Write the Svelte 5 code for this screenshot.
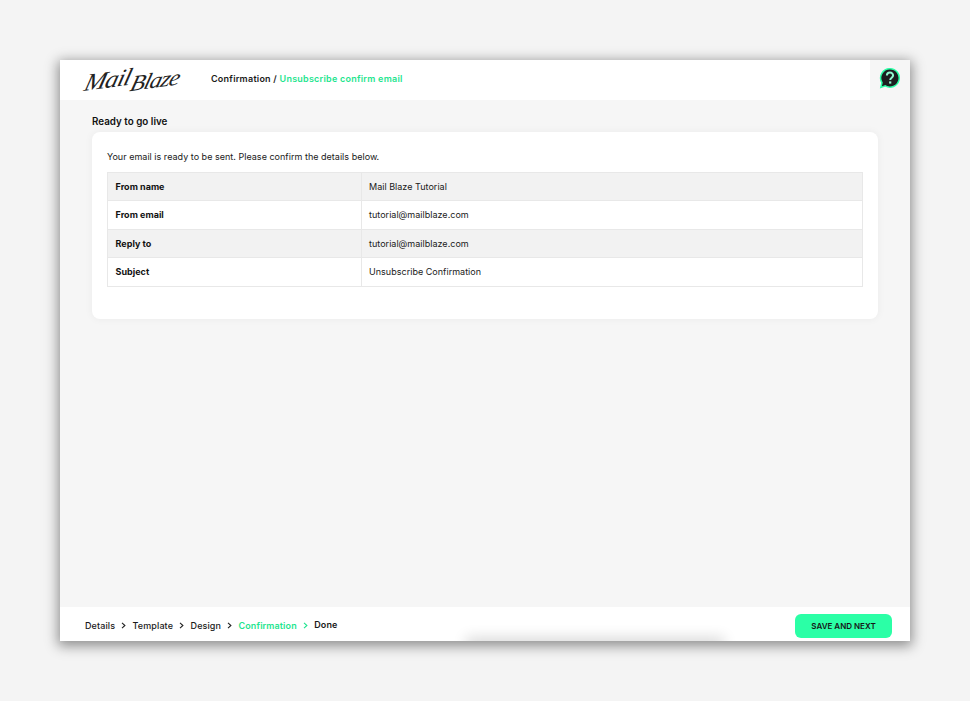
<script>
	const details = [
		{ label: 'From name', value: 'Mail Blaze Tutorial' },
		{ label: 'From email', value: 'tutorial@mailblaze.com' },
		{ label: 'Reply to', value: 'tutorial@mailblaze.com' },
		{ label: 'Subject', value: 'Unsubscribe Confirmation' }
	];

	const steps = [
		{ name: 'Details' },
		{ name: 'Template' },
		{ name: 'Design' },
		{ name: 'Confirmation', active: true },
		{ name: 'Done', last: true }
	];
</script>

<div class="page">
	<div class="window">
		<header>
			<div class="logo"><span>Mail</span><span class="blaze">Blaze</span></div>
			<div class="crumbs">Confirmation / <span class="green">Unsubscribe confirm email</span></div>
			<div class="help">
				<svg width="22" height="22" viewBox="0 0 22 22">
					<path d="M11 1.7a9.2 9.2 0 1 1-4.7 17.1L1.9 20.4l1.1-4.7A9.2 9.2 0 0 1 11 1.7z" fill="#1d1f20" stroke="#2bffa6" stroke-width="1.5" />
					<path d="M7.9 8.6a3.1 3.1 0 0 1 6.2 0c0 2-2.9 2.2-2.9 4.3" fill="none" stroke="#8ff8cf" stroke-width="2" />
					<rect x="10.1" y="14.4" width="2.2" height="2.2" fill="#8ff8cf" />
				</svg>
			</div>
		</header>

		<main>
			<h1>Ready to go live</h1>
			<section class="card">
				<p>Your email is ready to be sent. Please confirm the details below.</p>
				<table>
					<tbody>
						{#each details as row}
							<tr>
								<th>{row.label}</th>
								<td>{row.value}</td>
							</tr>
						{/each}
					</tbody>
				</table>
			</section>
		</main>

		<footer>
			<div class="glow"></div>
			<nav>
				{#each steps as step}
					<span class="step" class:green={step.active} class:last={step.last}>{step.name}</span>
					{#if !step.last}
						<svg class="chev" class:green={step.active} width="5" height="7" viewBox="0 0 5 7">
							<path d="M1 .8 3.9 3.5 1 6.2" fill="none" stroke="currentColor" stroke-width="1.1" />
						</svg>
					{/if}
				{/each}
			</nav>
			<button>SAVE AND NEXT</button>
		</footer>
	</div>
</div>

<style>
	:global(body) {
		margin: 0;
		background: #f4f4f4;
	}

	.page {
		padding: 60px;
		height: 701px;
		box-sizing: border-box;
		font-family: Inter, "Liberation Sans", sans-serif;
		font-size: 9px;
		letter-spacing: 0.02px;
		color: #1a1a1a;
	}

	.window {
		display: flex;
		flex-direction: column;
		height: 581px;
		background: #f6f6f6;
		box-shadow: 0 3px 12px 2px rgba(0, 0, 0, 0.42);
	}

	header {
		display: flex;
		align-items: flex-start;
		height: 40px;
		background: #fff;
		flex: none;
	}

	.logo {
		width: 125px;
		margin-left: 26px;
		padding-top: 5px;
		font-family: "Liberation Serif", serif;
		font-style: italic;
		font-size: 25px;
		line-height: 30px;
		letter-spacing: -0.9px;
		color: #222;
		white-space: nowrap;
	}

	.logo span {
		display: inline-block;
		transform: skewX(-22deg) rotate(-8deg);
	}

	.logo .blaze {
		margin-left: 2px;
		font-size: 23px;
		letter-spacing: -1px;
	}

	.crumbs {
		flex: 1;
		padding-top: 12.5px;
		line-height: 12px;
		font-weight: 600;
		letter-spacing: 0.24px;
	}

	.green {
		color: #1fe58f;
	}

	.help {
		display: flex;
		align-items: center;
		justify-content: center;
		width: 40px;
		height: 42px;
		padding-bottom: 6px;
		box-sizing: border-box;
		background: #f6f6f6;
	}

	main {
		flex: 1;
		padding: 15px 32px 0;
	}

	h1 {
		margin: 0 0 4px;
		font-size: 9.8px;
		line-height: 13px;
		font-weight: 600;
		color: #111;
	}

	.card {
		height: 187px;
		padding: 18px 15px 0;
		box-sizing: border-box;
		background: #fff;
		border-radius: 8px;
		box-shadow: 0 0 8px rgba(0, 0, 0, 0.05);
	}

	p {
		margin: 0 0 8.5px;
		line-height: 13px;
	}

	table {
		width: 100%;
		border-collapse: collapse;
		table-layout: fixed;
	}

	tr:nth-child(odd) {
		background: #f2f2f2;
	}

	th,
	td {
		height: 28.5px;
		padding: 0 7.5px;
		box-sizing: border-box;
		border: 1px solid #e8e8e8;
		text-align: left;
		line-height: 13px;
	}

	th {
		width: 253.5px;
		font-weight: 700;
		font-size: 9px;
		color: #111;
	}

	footer {
		position: relative;
		display: flex;
		align-items: center;
		justify-content: space-between;
		height: 34px;
		padding: 0 18px 0 25px;
		box-sizing: border-box;
		background: #fff;
		overflow: hidden;
		flex: none;
	}

	.glow {
		position: absolute;
		left: 410px;
		width: 250px;
		bottom: -12px;
		height: 12px;
		box-shadow: 0 0 14px 4px rgba(0, 0, 0, 0.14);
	}

	nav {
		position: relative;
		top: 1px;
		display: flex;
		align-items: center;
		font-weight: 500;
		letter-spacing: 0.1px;
	}

	.chev {
		margin: 0 6.5px 0 6px;
		color: #222;
	}

	.chev.green {
		color: #1fe58f;
	}

	.step.last {
		position: relative;
		top: -1px;
		font-weight: 600;
	}

	.step.green {
		font-weight: 600;
	}

	button {
		position: relative;
		top: 2px;
		width: 97px;
		height: 24px;
		padding: 0;
		border: 0;
		border-radius: 6px;
		background: #2bffa6;
		font: 600 8px Inter, "Liberation Sans", sans-serif;
		letter-spacing: 0;
		color: #161616;
	}
</style>
